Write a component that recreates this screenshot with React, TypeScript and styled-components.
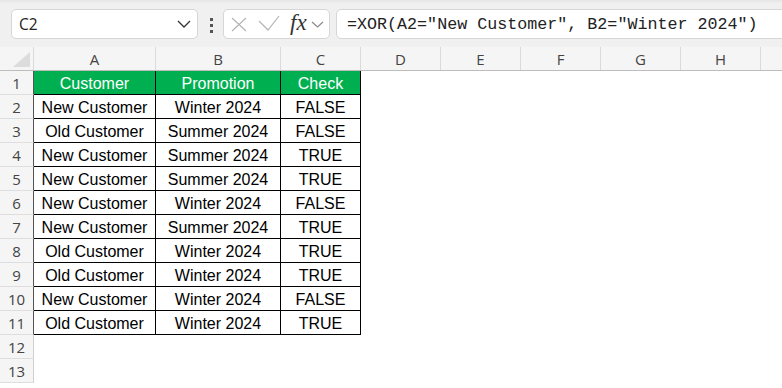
import styled, { createGlobalStyle } from "styled-components";

const GlobalStyle = createGlobalStyle`
  html, body {
    margin: 0;
    padding: 0;
    background: #ffffff;
    overflow: hidden;
  }
`;

interface Column {
  key: string;
  label: string;
  width: number;
}

// last column is only partly on screen, its letter falls outside the window
const columns: Column[] = [
  { key: "A", label: "A", width: 122 },
  { key: "B", label: "B", width: 125 },
  { key: "C", label: "C", width: 80 },
  { key: "D", label: "D", width: 80 },
  { key: "E", label: "E", width: 80 },
  { key: "F", label: "F", width: 80 },
  { key: "G", label: "G", width: 80 },
  { key: "H", label: "H", width: 80 },
  { key: "I", label: "", width: 80 },
];

const data: string[][] = [
  ["Customer", "Promotion", "Check"],
  ["New Customer", "Winter 2024", "FALSE"],
  ["Old Customer", "Summer 2024", "FALSE"],
  ["New Customer", "Summer 2024", "TRUE"],
  ["New Customer", "Summer 2024", "TRUE"],
  ["New Customer", "Winter 2024", "FALSE"],
  ["New Customer", "Summer 2024", "TRUE"],
  ["Old Customer", "Winter 2024", "TRUE"],
  ["Old Customer", "Winter 2024", "TRUE"],
  ["New Customer", "Winter 2024", "FALSE"],
  ["Old Customer", "Winter 2024", "TRUE"],
];

const TOTAL_ROWS = 13;

function App() {
  return (
    <Page>
      <GlobalStyle />
      <FormulaBar>
        <NameBox>
          <NameText>C2</NameText>
          <svg width="14" height="8" viewBox="0 0 14 8">
            <polyline
              points="1,1 7,7 13,1"
              fill="none"
              stroke="#333"
              strokeWidth="1.3"
            />
          </svg>
        </NameBox>
        <Dots>
          <Dot />
          <Dot />
          <Dot />
        </Dots>
        <FxBox>
          <svg width="16" height="15" viewBox="0 0 16 15">
            <path d="M1 1 L15 14 M15 1 L1 14" stroke="#b4b4b4" strokeWidth="1.2" />
          </svg>
          <CheckIcon width="22" height="16" viewBox="0 0 22 16">
            <polyline
              points="1,6 10,15 21,1"
              fill="none"
              stroke="#b4b4b4"
              strokeWidth="1.2"
            />
          </CheckIcon>
          <Fx>fx</Fx>
          <SmallChevron width="13" height="7" viewBox="0 0 13 7">
            <polyline
              points="1,1 6.5,6 12,1"
              fill="none"
              stroke="#8a8a8a"
              strokeWidth="1.2"
            />
          </SmallChevron>
        </FxBox>
        <FormulaBox>
          <FormulaText>=XOR(A2="New Customer", B2="Winter 2024")</FormulaText>
        </FormulaBox>
      </FormulaBar>

      <Sheet>
        <HeaderRow>
          <Corner>
            <svg width="17" height="15" viewBox="0 0 17 15">
              <polygon points="17,0 17,15 0,15" fill="#dcdcdc" />
            </svg>
          </Corner>
          {columns.map((c) => (
            <ColHeader key={c.key} $width={c.width}>
              {c.label}
            </ColHeader>
          ))}
        </HeaderRow>

        {Array.from({ length: TOTAL_ROWS }, (_, i) => {
          const values = data[i];
          const inTable = !!values;
          return (
            <Row key={i}>
              <RowHeader $dark={inTable}>{i + 1}</RowHeader>
              {columns.map((c, ci) => {
                const value = values && ci < 3 ? values[ci] : "";
                const bordered = inTable && ci < 3;
                return (
                  <Cell
                    key={c.key}
                    $width={c.width}
                    $bordered={bordered}
                    $head={inTable && i === 0 && ci < 3}
                  >
                    {value}
                  </Cell>
                );
              })}
            </Row>
          );
        })}
      </Sheet>
    </Page>
  );
}

export default App;

const Page = styled.div`
  width: 782px;
  height: 388px;
  overflow: hidden;
  background: #ffffff;
`;

const FormulaBar = styled.div`
  display: flex;
  align-items: flex-start;
  height: 47px;
  box-sizing: border-box;
  padding: 9px 0 0 11px;
  background: linear-gradient(#e4e4e4 0, #ececec 2px, #f0f0f0 4px);
`;

const NameBox = styled.div`
  display: flex;
  align-items: center;
  justify-content: space-between;
  flex-shrink: 0;
  box-sizing: border-box;
  width: 187px;
  height: 30px;
  padding: 0 6px 0 7px;
  background: #ffffff;
  border: 1px solid #d6d6d6;
  border-radius: 5px;
`;

const NameText = styled.span`
  font-family: "Segoe UI", "Open Sans", sans-serif;
  font-size: 15.5px;
  color: #222;
`;

const Dots = styled.div`
  display: flex;
  flex-direction: column;
  flex-shrink: 0;
  gap: 3px;
  margin: 9px 10px 0 12px;
`;

const Dot = styled.div`
  width: 3px;
  height: 3px;
  background: #555;
`;

const FxBox = styled.div`
  display: flex;
  align-items: center;
  flex-shrink: 0;
  box-sizing: border-box;
  width: 107px;
  height: 30px;
  padding-left: 7px;
  background: #ffffff;
  border: 1px solid #d6d6d6;
  border-radius: 5px;
`;

const CheckIcon = styled.svg`
  margin-left: 11px;
  margin-top: -2px;
`;

const Fx = styled.span`
  margin-left: 10px;
  margin-top: -3px;
  font-family: "Liberation Serif", serif;
  font-style: italic;
  font-size: 23px;
  line-height: 1;
  color: #333;
`;

const SmallChevron = styled.svg`
  margin-left: 4px;
  margin-top: 1px;
`;

const FormulaBox = styled.div`
  display: flex;
  align-items: center;
  flex: 1;
  height: 30px;
  box-sizing: border-box;
  margin-left: 6px;
  margin-right: -10px;
  padding-left: 10px;
  background: #ffffff;
  border: 1px solid #d6d6d6;
  border-radius: 5px;
`;

const FormulaText = styled.span`
  font-family: "Liberation Mono", monospace;
  font-size: 16.7px;
  color: #222;
  white-space: pre;
`;

const Sheet = styled.div`
  display: flex;
  flex-direction: column;
  width: 900px;
`;

const HeaderRow = styled.div`
  display: flex;
  height: 24px;
  box-sizing: border-box;
  background: #f5f5f5;
  border-bottom: 1px solid #bdbdbd;
`;

const Corner = styled.div`
  display: flex;
  align-items: flex-end;
  justify-content: flex-end;
  flex-shrink: 0;
  box-sizing: border-box;
  width: 34px;
  padding: 0 3px 3px 0;
  border-right: 1px solid #dadada;
`;

const ColHeader = styled.div<{ $width: number }>`
  display: flex;
  align-items: center;
  justify-content: center;
  flex-shrink: 0;
  box-sizing: border-box;
  width: ${(p) => p.$width}px;
  border-right: 1px solid #dadada;
  font-family: "Segoe UI", "Open Sans", sans-serif;
  font-size: 15px;
  color: #444;
`;

const Row = styled.div`
  display: flex;
  height: 24px;
`;

const RowHeader = styled.div<{ $dark: boolean }>`
  display: flex;
  align-items: center;
  justify-content: center;
  flex-shrink: 0;
  box-sizing: border-box;
  width: 34px;
  background: #f5f5f5;
  border-right: 1px solid ${(p) => (p.$dark ? "#555" : "#d0d0d0")};
  border-bottom: 1px solid #dedede;
  font-family: "Segoe UI", "Open Sans", sans-serif;
  font-size: 15px;
  color: #444;
`;

const Cell = styled.div<{
  $width: number;
  $bordered: boolean;
  $head: boolean;
}>`
  display: flex;
  align-items: flex-end;
  justify-content: center;
  flex-shrink: 0;
  box-sizing: border-box;
  width: ${(p) => p.$width}px;
  padding-bottom: 1px;
  border-right: 1px solid ${(p) => (p.$bordered ? "#000" : "transparent")};
  border-bottom: 1px solid ${(p) => (p.$bordered ? "#000" : "transparent")};
  background: ${(p) => (p.$head ? "#00b050" : "#ffffff")};
  color: ${(p) => (p.$head ? "#ffffff" : "#000000")};
  font-family: "Liberation Sans", Arial, sans-serif;
  font-size: 16px;
  white-space: nowrap;
  overflow: hidden;
`;
